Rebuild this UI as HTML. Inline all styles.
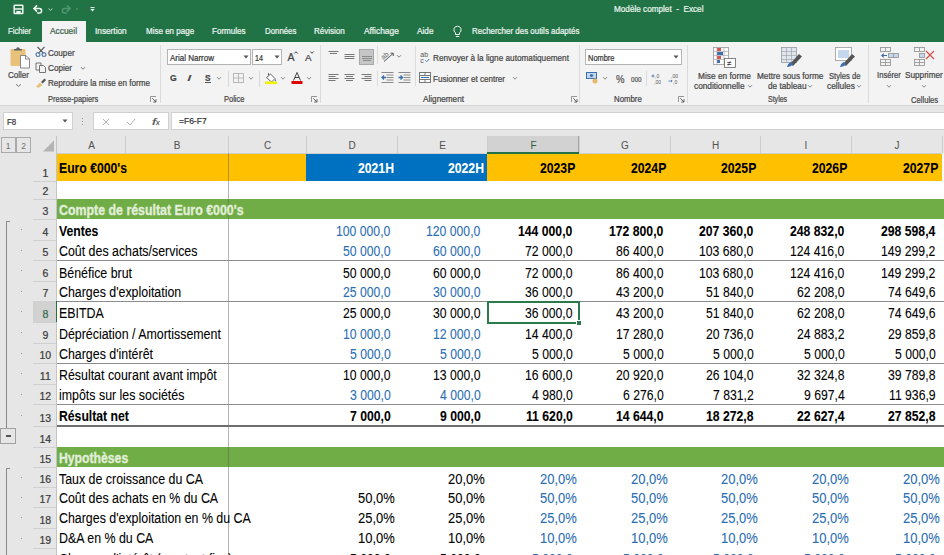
<!DOCTYPE html><html><head><meta charset="utf-8"><style>
*{margin:0;padding:0;box-sizing:border-box}
html,body{width:944px;height:555px;overflow:hidden;background:#fff}
body{position:relative;font-family:"Liberation Sans",sans-serif}
.x{position:absolute;white-space:pre}
.c{-webkit-text-stroke:0.08px currentColor}
.r{-webkit-text-stroke:0.22px currentColor}
.g{-webkit-text-stroke:0.35px currentColor}
svg.x{overflow:visible}
</style></head><body>
<div class="x" style="left:0px;top:0px;width:944px;height:42px;background:#217346"></div>
<svg class="x" style="left:13px;top:4px" width="11" height="11" viewBox="0 0 11 11"><g fill="none" stroke="#f0f7f2" stroke-width="1.5"><rect x="1.2" y="1.2" width="8.6" height="8.4" rx="0.6"/><path d="M1.2 5h8.6"/></g><rect x="3.3" y="7" width="4.4" height="2.6" fill="#f0f7f2"/></svg>
<svg class="x" style="left:33px;top:5px" width="11" height="9" viewBox="0 0 11 9"><g fill="none" stroke="#f0f7f2" stroke-width="1.5" stroke-linecap="round"><path d="M3.6 0.9L1 3.5l2.6 2.6"/><path d="M1.2 3.5h5.1a2.3 2.3 0 0 1 0 4.6h-1.6"/></g></svg>
<svg class="x" style="left:48px;top:8px" width="5" height="3" viewBox="0 0 5 3"><path d="M0.6 0.6l1.9 1.8 1.9-1.8" fill="none" stroke="#d0e4d8" stroke-width="0.9"/></svg>
<svg class="x" style="left:60px;top:5px" width="11" height="9" viewBox="0 0 11 9"><g fill="none" stroke="#4e9670" stroke-width="1.5" stroke-linecap="round"><path d="M7.4 0.9L10 3.5l-2.6 2.6"/><path d="M9.8 3.5h-5.1a2.3 2.3 0 0 0 0 4.6h1.6"/></g></svg>
<div class="x" style="left:76px;top:8.3px;width:2px;height:1.4px;background:#3f8a60"></div>
<svg class="x" style="left:89.5px;top:7px" width="5" height="5" viewBox="0 0 5 5"><path d="M0.5 0.6h4" stroke="#f0f7f2" stroke-width="1"/><path d="M0.3 2h4.4l-2.2 2.5z" fill="#f0f7f2"/></svg>
<div class="x r" style="left:613.70px;top:2.92px;font-size:8.3px;line-height:12px;height:12px;color:#eaf3ee;transform:scale(0.9848,1.0);transform-origin:0 8.88px;">Modèle complet  -  Excel</div>
<div class="x" style="left:42px;top:21px;width:44px;height:21px;background:#f3f3f3"></div>
<div class="x r" style="left:7.90px;top:25.22px;font-size:8.3px;line-height:12px;height:12px;color:#eef5f1;transform:scale(0.9316,1.0);transform-origin:0 8.88px;">Fichier</div>
<div class="x r" style="left:50.20px;top:25.22px;font-size:8.3px;line-height:12px;height:12px;color:#3a5f4b;transform:scale(1.0091,1.0);transform-origin:0 8.88px;">Accueil</div>
<div class="x r" style="left:95.30px;top:25.22px;font-size:8.3px;line-height:12px;height:12px;color:#eef5f1;transform:scale(0.9957,1.0);transform-origin:0 8.88px;">Insertion</div>
<div class="x r" style="left:145.60px;top:25.22px;font-size:8.3px;line-height:12px;height:12px;color:#eef5f1;transform:scale(0.9652,1.0);transform-origin:0 8.88px;">Mise en page</div>
<div class="x r" style="left:212.20px;top:25.22px;font-size:8.3px;line-height:12px;height:12px;color:#eef5f1;transform:scale(0.9713,1.0);transform-origin:0 8.88px;">Formules</div>
<div class="x r" style="left:264.60px;top:25.22px;font-size:8.3px;line-height:12px;height:12px;color:#eef5f1;transform:scale(0.9450,1.0);transform-origin:0 8.88px;">Données</div>
<div class="x r" style="left:314.30px;top:25.22px;font-size:8.3px;line-height:12px;height:12px;color:#eef5f1;transform:scale(0.9676,1.0);transform-origin:0 8.88px;">Révision</div>
<div class="x r" style="left:363.60px;top:25.22px;font-size:8.3px;line-height:12px;height:12px;color:#eef5f1;transform:scale(1.0128,1.0);transform-origin:0 8.88px;">Affichage</div>
<div class="x r" style="left:417.00px;top:25.22px;font-size:8.3px;line-height:12px;height:12px;color:#eef5f1;transform:scale(0.9932,1.0);transform-origin:0 8.88px;">Aide</div>
<div class="x r" style="left:471.60px;top:25.22px;font-size:8.3px;line-height:12px;height:12px;color:#eef5f1;transform:scale(0.9579,1.0);transform-origin:0 8.88px;">Rechercher des outils adaptés</div>
<svg class="x" style="left:452px;top:25px" width="11" height="13" viewBox="0 0 11 13"><g fill="none" stroke="#eef5f1" stroke-width="1"><path d="M5.5 1.2a3.6 3.6 0 0 0-2 6.6v1.7h4v-1.7a3.6 3.6 0 0 0-2-6.6z"/><path d="M3.8 11.5h3.4"/></g></svg>
<div class="x" style="left:0px;top:42px;width:944px;height:63px;background:#f3f3f3"></div>
<div class="x" style="left:0px;top:105px;width:944px;height:1px;background:#d4d4d4"></div>
<div class="x" style="left:160px;top:45px;width:1px;height:58px;background:#dadada"></div>
<div class="x" style="left:320px;top:45px;width:1px;height:58px;background:#dadada"></div>
<div class="x" style="left:579px;top:45px;width:1px;height:58px;background:#dadada"></div>
<div class="x" style="left:687px;top:45px;width:1px;height:58px;background:#dadada"></div>
<div class="x" style="left:868px;top:45px;width:1px;height:58px;background:#dadada"></div>
<svg class="x" style="left:9px;top:46px" width="23" height="23" viewBox="0 0 23 23"><rect x="1.5" y="3" width="15" height="17" rx="1" fill="#e8c27a"/><path d="M5 4.5h8v-1.5h-2.2a1.8 1.8 0 0 0-3.6 0H5z" fill="#5f5f5f"/><path d="M11.5 9.5h5.5l3.5 3.5v9h-9z" fill="#fff" stroke="#7a7a7a" stroke-width="0.9"/><path d="M16.5 9.5v3.5h4" fill="none" stroke="#7a7a7a" stroke-width="0.9"/></svg>
<div class="x r" style="left:7.80px;top:69.35px;font-size:8.8px;line-height:12px;height:12px;color:#444;transform:scale(0.9136,1.0);transform-origin:0 9.05px;">Coller</div>
<svg class="x" style="left:15px;top:83px" width="7" height="5" viewBox="0 0 7 5"><path d="M1 1.2l2.5 2.3 2.5-2.3" fill="none" stroke="#666" stroke-width="0.9"/></svg>
<svg class="x" style="left:35px;top:46px" width="12" height="11" viewBox="0 0 12 11"><g fill="none" stroke-width="1.2"><path d="M2.5 0.8l6 6.5M9.5 0.8l-6 6.5" stroke="#555"/><circle cx="3" cy="8.6" r="1.9" stroke="#5a80b0"/><circle cx="9" cy="8.6" r="1.9" stroke="#5a80b0"/></g></svg>
<div class="x r" style="left:48.40px;top:46.55px;font-size:8.8px;line-height:12px;height:12px;color:#444;transform:scale(0.9216,1.0);transform-origin:0 9.05px;">Couper</div>
<svg class="x" style="left:35px;top:62px" width="12" height="11" viewBox="0 0 12 11"><g fill="none" stroke="#666" stroke-width="0.9"><path d="M1 1h5v7h-5z"/><path d="M4.5 3.5h4l2 2v5h-6z" fill="#f3f3f3"/></g></svg>
<div class="x r" style="left:48.40px;top:61.85px;font-size:8.8px;line-height:12px;height:12px;color:#444;transform:scale(0.9257,1.0);transform-origin:0 9.05px;">Copier</div>
<svg class="x" style="left:80px;top:66px" width="6" height="5" viewBox="0 0 6 5"><path d="M1 1.2l2 2 2-2" fill="none" stroke="#666" stroke-width="0.9"/></svg>
<svg class="x" style="left:35px;top:78px" width="12" height="10" viewBox="0 0 12 10"><path d="M1 8.5l4-4 2.5 2.5-4 3z" fill="#e8c27a"/><path d="M6 4l3.5-3.5 1.6 1.6-3.5 3.5z" fill="#555"/></svg>
<div class="x r" style="left:48.40px;top:77.45px;font-size:8.8px;line-height:12px;height:12px;color:#444;transform:scale(0.9186,1.0);transform-origin:0 9.05px;">Reproduire la mise en forme</div>
<div class="x r" style="left:48.40px;top:93.45px;font-size:8.8px;line-height:12px;height:12px;color:#444;transform:scale(0.8499,1.0);transform-origin:0 9.05px;">Presse-papiers</div>
<svg class="x" style="left:150px;top:96px" width="7" height="7" viewBox="0 0 7 7"><path d="M0.5 6V0.5H6" fill="none" stroke="#8a8a8a" stroke-width="0.9"/><path d="M2.3 2.3l3.6 3.6M6 3.2v2.8H3.2" fill="none" stroke="#555" stroke-width="0.9"/></svg>
<div class="x" style="left:166.5px;top:49px;width:84px;height:16px;background:#fff;border:1px solid #b4b4b4"></div>
<div class="x r" style="left:169.50px;top:51.95px;font-size:8.8px;line-height:12px;height:12px;color:#333;transform:scale(0.9089,1.0);transform-origin:0 9.05px;">Arial Narrow</div>
<svg class="x" style="left:243px;top:55px" width="6" height="4" viewBox="0 0 6 4"><path d="M0.5 0.5h5l-2.5 3z" fill="#555"/></svg>
<div class="x" style="left:252px;top:49px;width:30px;height:16px;background:#fff;border:1px solid #b4b4b4"></div>
<div class="x r" style="left:255.00px;top:51.95px;font-size:8.8px;line-height:12px;height:12px;color:#333;transform:scale(0.8172,1.0);transform-origin:0 9.05px;">14</div>
<svg class="x" style="left:274px;top:55px" width="6" height="4" viewBox="0 0 6 4"><path d="M0.5 0.5h5l-2.5 3z" fill="#555"/></svg>
<div class="x r" style="left:287.50px;top:50.36px;font-size:10.5px;line-height:15px;height:15px;color:#444;">A</div>
<svg class="x" style="left:294px;top:51px" width="4" height="3" viewBox="0 0 4 3"><path d="M0.3 2.5l1.7-1.8 1.7 1.8" fill="none" stroke="#444" stroke-width="1"/></svg>
<div class="x r" style="left:304.50px;top:51.88px;font-size:9px;line-height:13px;height:13px;color:#444;transform:scale(1.0828,1.0);transform-origin:0 9.62px;">A</div>
<svg class="x" style="left:310px;top:51px" width="4" height="3" viewBox="0 0 4 3"><path d="M0.3 0.5l1.7 1.8 1.7-1.8" fill="none" stroke="#444" stroke-width="1"/></svg>
<div class="x r" style="left:170.30px;top:71.65px;font-size:8.5px;line-height:12px;height:12px;color:#444;font-weight:bold;transform:scale(1.0134,1.0);transform-origin:0 8.95px;">G</div>
<div class="x r" style="left:187.00px;top:70.81px;font-size:9.5px;line-height:13px;height:13px;color:#444;transform:scale(1.7052,1);transform-origin:0 9.79px;font-style:italic;">I</div>
<div class="x r" style="left:204.50px;top:71.65px;font-size:8.5px;line-height:12px;height:12px;color:#444;font-weight:bold;transform:scale(0.9701,1.0);transform-origin:0 8.95px;">S</div>
<div class="x" style="left:204.5px;top:82px;width:6px;height:1px;background:#555"></div>
<svg class="x" style="left:216px;top:76px" width="6" height="5" viewBox="0 0 6 5"><path d="M1 1.2l2 2 2-2" fill="none" stroke="#777" stroke-width="0.9"/></svg>
<svg class="x" style="left:248px;top:76px" width="6" height="5" viewBox="0 0 6 5"><path d="M1 1.2l2 2 2-2" fill="none" stroke="#777" stroke-width="0.9"/></svg>
<svg class="x" style="left:279.5px;top:76px" width="6" height="5" viewBox="0 0 6 5"><path d="M1 1.2l2 2 2-2" fill="none" stroke="#777" stroke-width="0.9"/></svg>
<svg class="x" style="left:306px;top:76px" width="6" height="5" viewBox="0 0 6 5"><path d="M1 1.2l2 2 2-2" fill="none" stroke="#777" stroke-width="0.9"/></svg>
<div class="x" style="left:228px;top:71px;width:1px;height:16px;background:#d8d8d8"></div>
<div class="x" style="left:259px;top:71px;width:1px;height:16px;background:#d8d8d8"></div>
<svg class="x" style="left:233px;top:73px" width="11" height="10" viewBox="0 0 11 10"><g fill="none" stroke="#b8b8b8" stroke-width="1"><rect x="0.5" y="0.5" width="10" height="9"/><path d="M5.5 0.5v9M0.5 5h10"/></g></svg>
<svg class="x" style="left:264px;top:72px" width="14" height="13" viewBox="0 0 14 13"><path d="M2.5 5.5l4-3.5 4.5 4.5-3.5 3.5z" fill="#fff" stroke="#555" stroke-width="0.9"/><path d="M4.5 3.5v-2.5" stroke="#555" stroke-width="0.9"/><path d="M11 6.5q1.8 1.8 0.6 3.2q-1.4-0.6-0.6-3.2z" fill="#4a7ab8"/><rect x="1" y="9.5" width="12" height="2.6" fill="#f2f200"/></svg>
<svg class="x" style="left:291px;top:72px" width="12" height="13" viewBox="0 0 12 13"><path d="M2.5 8.5l3.5-8 3.5 8M4 5.5h4" fill="none" stroke="#444" stroke-width="1"/><rect x="0.5" y="9" width="11" height="3" fill="#e00000"/></svg>
<div class="x r" style="left:224.30px;top:93.35px;font-size:8.8px;line-height:12px;height:12px;color:#444;transform:scale(0.8511,1.0);transform-origin:0 9.05px;">Police</div>
<svg class="x" style="left:311px;top:96px" width="7" height="7" viewBox="0 0 7 7"><path d="M0.5 6V0.5H6" fill="none" stroke="#8a8a8a" stroke-width="0.9"/><path d="M2.3 2.3l3.6 3.6M6 3.2v2.8H3.2" fill="none" stroke="#555" stroke-width="0.9"/></svg>
<svg class="x" style="left:328px;top:50px" width="12" height="10" viewBox="0 0 12 10"><path d="M0.5 1.5h10" stroke="#777" stroke-width="1"/><path d="M2 3.5h7" stroke="#777" stroke-width="1"/></svg>
<svg class="x" style="left:344px;top:52px" width="12" height="10" viewBox="0 0 12 10"><path d="M0.5 2.5h10" stroke="#777" stroke-width="1"/><path d="M0.5 4.5h10" stroke="#777" stroke-width="1"/><path d="M0.5 6.5h10" stroke="#777" stroke-width="1"/></svg>
<div class="x" style="left:359px;top:49px;width:15px;height:16px;background:#c6c6c6;border:1px solid #a8a8a8"></div>
<svg class="x" style="left:361px;top:55px" width="12" height="10" viewBox="0 0 12 10"><path d="M1 1.5h10" stroke="#8a8a8a" stroke-width="1"/><path d="M1 3.5h10" stroke="#8a8a8a" stroke-width="1"/><path d="M2 5.5h8" stroke="#8a8a8a" stroke-width="1"/></svg>
<svg class="x" style="left:381px;top:50px" width="14" height="12" viewBox="0 0 14 12"><text x="0" y="8" font-size="7" fill="#555" font-family="Liberation Sans" transform="rotate(-40 4 6)" style="-webkit-text-stroke:0.2px #555">ab</text><path d="M3 11.5l9-8M9.5 3.2h2.8v2.8" fill="none" stroke="#555" stroke-width="1"/></svg>
<svg class="x" style="left:396px;top:54px" width="6" height="5" viewBox="0 0 6 5"><path d="M1 1.2l2 2 2-2" fill="none" stroke="#777" stroke-width="0.9"/></svg>
<div class="x" style="left:377px;top:46px;width:1px;height:18px;background:#dcdcdc"></div>
<div class="x" style="left:377px;top:71px;width:1px;height:15px;background:#dcdcdc"></div>
<div class="x" style="left:415px;top:46px;width:1px;height:40px;background:#dcdcdc"></div>
<svg class="x" style="left:328px;top:73px" width="12" height="10" viewBox="0 0 12 10"><path d="M0.5 1.5h10" stroke="#777" stroke-width="1"/><path d="M0.5 3.5h7" stroke="#777" stroke-width="1"/><path d="M0.5 5.5h10" stroke="#777" stroke-width="1"/><path d="M0.5 7.5h7" stroke="#777" stroke-width="1"/></svg>
<svg class="x" style="left:344px;top:73px" width="12" height="10" viewBox="0 0 12 10"><path d="M0.5 1.5h10" stroke="#777" stroke-width="1"/><path d="M2 3.5h7" stroke="#777" stroke-width="1"/><path d="M0.5 5.5h10" stroke="#777" stroke-width="1"/><path d="M2 7.5h7" stroke="#777" stroke-width="1"/></svg>
<svg class="x" style="left:361px;top:73px" width="12" height="10" viewBox="0 0 12 10"><path d="M0.5 1.5h10" stroke="#777" stroke-width="1"/><path d="M3.5 3.5h7" stroke="#777" stroke-width="1"/><path d="M0.5 5.5h10" stroke="#777" stroke-width="1"/><path d="M3.5 7.5h7" stroke="#777" stroke-width="1"/></svg>
<svg class="x" style="left:381px;top:72px" width="13" height="11" viewBox="0 0 13 11"><path d="M0.5 0.5h12M5.5 3h7M5.5 5.5h7M5.5 8h7M0.5 10.5h12" stroke="#8a8a8a" stroke-width="1"/><path d="M5 5.5h-4M3 3.5l-2 2 2 2" fill="none" stroke="#3b6fb0" stroke-width="1.3"/></svg>
<svg class="x" style="left:398px;top:72px" width="13" height="11" viewBox="0 0 13 11"><path d="M0.5 0.5h12M5.5 3h7M5.5 5.5h7M5.5 8h7M0.5 10.5h12" stroke="#8a8a8a" stroke-width="1"/><path d="M0.5 5.5h4M2.5 3.5l2 2-2 2" fill="none" stroke="#3b6fb0" stroke-width="1.3"/></svg>
<svg class="x" style="left:419.5px;top:50.5px" width="12" height="12" viewBox="0 0 12 12"><text x="0.3" y="5.6" font-size="7" fill="#555" font-family="Liberation Sans" style="-webkit-text-stroke:0.2px #555">ab</text><text x="0.3" y="11.6" font-size="7" fill="#555" font-family="Liberation Sans" style="-webkit-text-stroke:0.2px #555">c</text><path d="M5.5 9.3l1.3 1.3 2.5-2.6" fill="none" stroke="#3b6fb0" stroke-width="1"/></svg>
<div class="x r" style="left:433.00px;top:52.05px;font-size:8.8px;line-height:12px;height:12px;color:#444;transform:scale(0.9329,1.0);transform-origin:0 9.05px;">Renvoyer à la ligne automatiquement</div>
<svg class="x" style="left:419px;top:72px" width="12" height="11" viewBox="0 0 12 11"><rect x="0.5" y="0.5" width="11" height="10" fill="#fff" stroke="#777"/><path d="M0.5 3.5h11M0.5 7.5h11M6 0.5v3M6 7.5v3" stroke="#777"/><path d="M2 5.5h8" stroke="#3b6fb0"/></svg>
<div class="x r" style="left:433.00px;top:72.95px;font-size:8.8px;line-height:12px;height:12px;color:#444;transform:scale(0.9142,1.0);transform-origin:0 9.05px;">Fusionner et centrer</div>
<svg class="x" style="left:512px;top:76px" width="6" height="5" viewBox="0 0 6 5"><path d="M1 1.2l2 2 2-2" fill="none" stroke="#777" stroke-width="0.9"/></svg>
<div class="x r" style="left:423.00px;top:93.35px;font-size:8.8px;line-height:12px;height:12px;color:#444;transform:scale(0.9312,1.0);transform-origin:0 9.05px;">Alignement</div>
<svg class="x" style="left:571px;top:96px" width="7" height="7" viewBox="0 0 7 7"><path d="M0.5 6V0.5H6" fill="none" stroke="#8a8a8a" stroke-width="0.9"/><path d="M2.3 2.3l3.6 3.6M6 3.2v2.8H3.2" fill="none" stroke="#555" stroke-width="0.9"/></svg>
<div class="x" style="left:585px;top:49px;width:97px;height:16px;background:#fff;border:1px solid #b4b4b4"></div>
<div class="x r" style="left:588.00px;top:51.75px;font-size:8.8px;line-height:12px;height:12px;color:#333;transform:scale(0.8466,1.0);transform-origin:0 9.05px;">Nombre</div>
<svg class="x" style="left:673px;top:55px" width="6" height="4" viewBox="0 0 6 4"><path d="M0.5 0.5h5l-2.5 3z" fill="#555"/></svg>
<svg class="x" style="left:586px;top:72px" width="13" height="12" viewBox="0 0 13 12"><rect x="0.5" y="0.5" width="10" height="6" fill="#c5d7ee" stroke="#3b6fb0"/><circle cx="5.5" cy="3.5" r="1.6" fill="#3b6fb0"/><circle cx="9" cy="9" r="2.5" fill="#e8b86a"/></svg>
<svg class="x" style="left:602px;top:76px" width="6" height="5" viewBox="0 0 6 5"><path d="M1 1.2l2 2 2-2" fill="none" stroke="#777" stroke-width="0.9"/></svg>
<div class="x r" style="left:615.50px;top:72.53px;font-size:10px;line-height:14px;height:14px;color:#555;transform:scale(0.9560,1.0);transform-origin:0 10.46px;">%</div>
<div class="x r" style="left:630.80px;top:74.75px;font-size:6.5px;line-height:9px;height:9px;color:#555;transform:scale(0.9682,1.0);transform-origin:0 6.75px;">000</div>
<div class="x" style="left:646px;top:71px;width:1px;height:15px;background:#dcdcdc"></div>
<svg class="x" style="left:651px;top:73px" width="12" height="11" viewBox="0 0 12 11"><text x="4" y="4.5" font-size="5" fill="#555" font-family="Liberation Sans">,0</text><text x="3" y="10.5" font-size="5" fill="#555" font-family="Liberation Sans">,00</text><path d="M0.5 3h3M2 1.5v3" stroke="#3b6fb0" stroke-width="0.8"/></svg>
<svg class="x" style="left:668px;top:73px" width="12" height="11" viewBox="0 0 12 11"><text x="3" y="4.5" font-size="5" fill="#555" font-family="Liberation Sans">,00</text><text x="5" y="10.5" font-size="5" fill="#555" font-family="Liberation Sans">,0</text><path d="M0.5 8h3.5M3 6.8l1.2 1.2-1.2 1.2" fill="none" stroke="#3b6fb0" stroke-width="0.8"/></svg>
<div class="x r" style="left:613.50px;top:93.35px;font-size:8.8px;line-height:12px;height:12px;color:#444;transform:scale(0.8882,1.0);transform-origin:0 9.05px;">Nombre</div>
<svg class="x" style="left:678px;top:96px" width="7" height="7" viewBox="0 0 7 7"><path d="M0.5 6V0.5H6" fill="none" stroke="#8a8a8a" stroke-width="0.9"/><path d="M2.3 2.3l3.6 3.6M6 3.2v2.8H3.2" fill="none" stroke="#555" stroke-width="0.9"/></svg>
<svg class="x" style="left:713px;top:47px" width="23" height="21" viewBox="0 0 23 21"><g stroke="#9a9a9a" stroke-width="0.8" fill="#fff"><rect x="0.5" y="0.5" width="15" height="17"/></g><rect x="4" y="1" width="4" height="3" fill="#d9534f"/><rect x="4" y="5" width="6" height="3" fill="#3b6fb0"/><rect x="4" y="9" width="4" height="3" fill="#d9534f"/><rect x="4" y="13" width="3" height="3" fill="#3b6fb0"/><path d="M0.5 4.5h15M0.5 8.5h15M0.5 12.5h15M4 0.5v17M11 0.5v17" stroke="#9a9a9a" stroke-width="0.6"/><rect x="11.5" y="11.5" width="11" height="9" fill="#fff" stroke="#666" stroke-width="0.8"/><text x="14" y="19" font-size="8" fill="#333" font-family="Liberation Sans">≠</text></svg>
<div class="x r" style="left:697.70px;top:69.65px;font-size:8.8px;line-height:12px;height:12px;color:#444;transform:scale(0.9470,1.0);transform-origin:0 9.05px;">Mise en forme</div>
<div class="x r" style="left:694.00px;top:80.35px;font-size:8.8px;line-height:12px;height:12px;color:#444;transform:scale(0.9383,1.0);transform-origin:0 9.05px;">conditionnelle</div>
<svg class="x" style="left:747px;top:84px" width="6" height="5" viewBox="0 0 6 5"><path d="M1 1.2l2 2 2-2" fill="none" stroke="#777" stroke-width="0.9"/></svg>
<svg class="x" style="left:781px;top:47px" width="22" height="21" viewBox="0 0 22 21"><rect x="0.5" y="0.5" width="15" height="15" fill="#dfe6ef" stroke="#9a9a9a" stroke-width="0.8"/><path d="M0.5 4.5h15M0.5 8.5h15M0.5 12.5h15M5.5 0.5v15M10.5 0.5v15" stroke="#9a9a9a" stroke-width="0.6"/><path d="M9 17l9-10 3 2.5-9 9.5z" fill="#555"/><path d="M6 20q1-4 4-5l2 2q-2 3-6 3z" fill="#3b6fb0"/></svg>
<div class="x r" style="left:756.90px;top:69.65px;font-size:8.8px;line-height:12px;height:12px;color:#444;transform:scale(0.9363,1.0);transform-origin:0 9.05px;">Mettre sous forme</div>
<div class="x r" style="left:768.00px;top:80.35px;font-size:8.8px;line-height:12px;height:12px;color:#444;transform:scale(0.9366,1.0);transform-origin:0 9.05px;">de tableau</div>
<svg class="x" style="left:806.5px;top:84px" width="6" height="5" viewBox="0 0 6 5"><path d="M1 1.2l2 2 2-2" fill="none" stroke="#777" stroke-width="0.9"/></svg>
<svg class="x" style="left:835px;top:47px" width="21" height="21" viewBox="0 0 21 21"><rect x="0.5" y="0.5" width="16" height="13" fill="#fff" stroke="#9a9a9a" stroke-width="0.8"/><rect x="3" y="3" width="11" height="8" fill="#c5d7ee"/><path d="M8 17l9-10 3 2.5-9 9.5z" fill="#555"/><path d="M5 20q1-4 4-5l2 2q-2 3-6 3z" fill="#3b6fb0"/></svg>
<div class="x r" style="left:828.60px;top:69.65px;font-size:8.8px;line-height:12px;height:12px;color:#444;transform:scale(0.8674,1.0);transform-origin:0 9.05px;">Styles de</div>
<div class="x r" style="left:827.00px;top:80.35px;font-size:8.8px;line-height:12px;height:12px;color:#444;transform:scale(0.9540,1.0);transform-origin:0 9.05px;">cellules</div>
<svg class="x" style="left:855.5px;top:84px" width="6" height="5" viewBox="0 0 6 5"><path d="M1 1.2l2 2 2-2" fill="none" stroke="#777" stroke-width="0.9"/></svg>
<div class="x r" style="left:767.60px;top:93.45px;font-size:8.8px;line-height:12px;height:12px;color:#444;transform:scale(0.7970,1.0);transform-origin:0 9.05px;">Styles</div>
<svg class="x" style="left:880px;top:47px" width="19" height="19" viewBox="0 0 19 19"><g fill="none" stroke="#999" stroke-width="0.9"><rect x="0.5" y="0.5" width="10" height="4"/><path d="M5.5 0.5v4"/><rect x="0.5" y="12.5" width="10" height="6"/><path d="M5.5 12.5v6M0.5 15.5h10"/><rect x="8.5" y="6.5" width="10" height="4" fill="#c5d7ee"/><path d="M13.5 6.5v4"/></g><path d="M7 8.5h-5M3.8 6.6l-2 1.9 2 1.9" fill="none" stroke="#3b6fb0" stroke-width="1.1"/></svg>
<div class="x r" style="left:876.80px;top:69.35px;font-size:8.8px;line-height:12px;height:12px;color:#444;transform:scale(0.8726,1.0);transform-origin:0 9.05px;">Insérer</div>
<svg class="x" style="left:886.2px;top:84px" width="6" height="5" viewBox="0 0 6 5"><path d="M1 1.2l2 2 2-2" fill="none" stroke="#777" stroke-width="0.9"/></svg>
<svg class="x" style="left:914px;top:47px" width="22" height="19" viewBox="0 0 22 19"><g fill="none" stroke="#999" stroke-width="0.9"><rect x="0.5" y="0.5" width="10" height="4"/><path d="M5.5 0.5v4"/><rect x="0.5" y="12.5" width="10" height="6"/><path d="M5.5 12.5v6M0.5 15.5h10"/><rect x="5.5" y="6.5" width="5" height="4" fill="#c5d7ee"/></g><path d="M12 4l8 8M20 4l-8 8" stroke="#d9534f" stroke-width="1.3"/></svg>
<div class="x r" style="left:905.00px;top:69.35px;font-size:8.8px;line-height:12px;height:12px;color:#444;transform:scale(0.9312,1.0);transform-origin:0 9.05px;">Supprimer</div>
<svg class="x" style="left:920.8px;top:84px" width="6" height="5" viewBox="0 0 6 5"><path d="M1 1.2l2 2 2-2" fill="none" stroke="#777" stroke-width="0.9"/></svg>
<div class="x r" style="left:910.50px;top:93.55px;font-size:8.8px;line-height:12px;height:12px;color:#444;transform:scale(0.8689,1.0);transform-origin:0 9.05px;">Cellules</div>
<div class="x" style="left:0px;top:106px;width:944px;height:30px;background:#e6e6e6"></div>
<div class="x" style="left:2.5px;top:112px;width:70px;height:18px;background:#fff;border:1px solid #d0d0d0"></div>
<div class="x r" style="left:7.00px;top:115.58px;font-size:9px;line-height:13px;height:13px;color:#333;transform:scale(0.8759,1.0);transform-origin:0 9.62px;">F8</div>
<svg class="x" style="left:62px;top:119px" width="6" height="4" viewBox="0 0 6 4"><path d="M0.5 0.5h5l-2.5 3z" fill="#555"/></svg>
<div class="x" style="left:82px;top:118px;width:1px;height:1.2px;background:#999"></div>
<div class="x" style="left:82px;top:121px;width:1px;height:1.2px;background:#999"></div>
<div class="x" style="left:82px;top:124px;width:1px;height:1.2px;background:#999"></div>
<div class="x" style="left:93px;top:112px;width:75.5px;height:18px;background:#fff;border:1px solid #d0d0d0"></div>
<svg class="x" style="left:102px;top:118px" width="8" height="8" viewBox="0 0 8 8"><path d="M1 1l6 6M7 1l-6 6" stroke="#b0b0b0" stroke-width="1"/></svg>
<svg class="x" style="left:126px;top:118px" width="10" height="8" viewBox="0 0 10 8"><path d="M1 4l3 3 5-6" fill="none" stroke="#b0b0b0" stroke-width="1"/></svg>
<div class="x r" style="left:152.00px;top:115.21px;font-size:9.5px;line-height:13px;height:13px;color:#555;transform:scale(1.5157,1.0);transform-origin:0 9.79px;font-style:italic;">f</div>
<div class="x r" style="left:155.80px;top:118.07px;font-size:7px;line-height:10px;height:10px;color:#555;transform:scale(1.0286,1.0);transform-origin:0 7.43px;font-style:italic;">x</div>
<div class="x" style="left:170.5px;top:112px;width:780px;height:18px;background:#fff;border:1px solid #d0d0d0"></div>
<div class="x r" style="left:179.10px;top:115.38px;font-size:9px;line-height:13px;height:13px;color:#333;transform:scale(0.9433,1.0);transform-origin:0 9.62px;">=F6-F7</div>
<div class="x" style="left:0px;top:136px;width:944px;height:17px;background:#e6e6e6"></div>
<div class="x" style="left:487px;top:136px;width:92px;height:17px;background:#d2d2d2"></div>
<div class="x" style="left:125px;top:136px;width:1px;height:17px;background:#cdcdcd"></div>
<div class="x" style="left:88.16px;top:138.84px;font-size:10px;line-height:14px;height:14px;color:#505050;">A</div>
<div class="x" style="left:228px;top:136px;width:1px;height:17px;background:#cdcdcd"></div>
<div class="x" style="left:173.66px;top:138.84px;font-size:10px;line-height:14px;height:14px;color:#505050;">B</div>
<div class="x" style="left:306px;top:136px;width:1px;height:17px;background:#cdcdcd"></div>
<div class="x" style="left:263.89px;top:138.84px;font-size:10px;line-height:14px;height:14px;color:#505050;">C</div>
<div class="x" style="left:397px;top:136px;width:1px;height:17px;background:#cdcdcd"></div>
<div class="x" style="left:348.39px;top:138.84px;font-size:10px;line-height:14px;height:14px;color:#505050;">D</div>
<div class="x" style="left:487px;top:136px;width:1px;height:17px;background:#cdcdcd"></div>
<div class="x" style="left:439.16px;top:138.84px;font-size:10px;line-height:14px;height:14px;color:#505050;">E</div>
<div class="x" style="left:579px;top:136px;width:1px;height:17px;background:#cdcdcd"></div>
<div class="x" style="left:530.45px;top:138.84px;font-size:10px;line-height:14px;height:14px;color:#2d5a40;">F</div>
<div class="x" style="left:670px;top:136px;width:1px;height:17px;background:#cdcdcd"></div>
<div class="x" style="left:621.11px;top:138.84px;font-size:10px;line-height:14px;height:14px;color:#505050;">G</div>
<div class="x" style="left:760px;top:136px;width:1px;height:17px;background:#cdcdcd"></div>
<div class="x" style="left:711.89px;top:138.84px;font-size:10px;line-height:14px;height:14px;color:#505050;">H</div>
<div class="x" style="left:851px;top:136px;width:1px;height:17px;background:#cdcdcd"></div>
<div class="x" style="left:804.61px;top:138.84px;font-size:10px;line-height:14px;height:14px;color:#505050;">I</div>
<div class="x" style="left:942px;top:136px;width:1px;height:17px;background:#cdcdcd"></div>
<div class="x" style="left:894.50px;top:138.84px;font-size:10px;line-height:14px;height:14px;color:#505050;">J</div>
<div class="x" style="left:56px;top:136px;width:1px;height:419px;background:#c4c4c4"></div>
<div class="x" style="left:57px;top:153px;width:887px;height:1px;background:#cfcfcf"></div>
<div class="x" style="left:487px;top:152px;width:92px;height:2px;background:#217346"></div>
<div class="x" style="left:578px;top:136px;width:1px;height:16px;background:#a6a6a6"></div>
<div class="x" style="left:0.5px;top:137px;width:15px;height:16px;background:#e6e6e6;border:1px solid #a9a9a9"></div>
<div class="x" style="left:5.64px;top:139.55px;font-size:8.5px;line-height:12px;height:12px;color:#707070;">1</div>
<div class="x" style="left:16px;top:137px;width:15px;height:16px;background:#e6e6e6;border:1px solid #a9a9a9"></div>
<div class="x" style="left:21.14px;top:139.55px;font-size:8.5px;line-height:12px;height:12px;color:#707070;">2</div>
<svg class="x" style="left:43px;top:140px" width="12" height="12" viewBox="0 0 12 12"><path d="M11 0.5v11h-11z" fill="#b3b3b3"/></svg>
<div class="x" style="left:0px;top:153px;width:56px;height:402px;background:#e6e6e6"></div>
<div class="x" style="left:32px;top:153px;width:24px;height:402px;background:#e6e6e6"></div>
<div class="x" style="left:33px;top:181px;width:23px;height:1px;background:#d0d0d0"></div>
<div class="x r" style="left:42.38px;top:166.06px;font-size:10.5px;line-height:15px;height:15px;color:#3a3a3a;">1</div>
<div class="x" style="left:33px;top:199px;width:23px;height:1px;background:#d0d0d0"></div>
<div class="x r" style="left:42.38px;top:184.06px;font-size:10.5px;line-height:15px;height:15px;color:#3a3a3a;">2</div>
<div class="x" style="left:33px;top:219px;width:23px;height:1px;background:#d0d0d0"></div>
<div class="x r" style="left:42.38px;top:204.06px;font-size:10.5px;line-height:15px;height:15px;color:#3a3a3a;">3</div>
<div class="x" style="left:33px;top:240px;width:23px;height:1px;background:#d0d0d0"></div>
<div class="x r" style="left:42.38px;top:225.06px;font-size:10.5px;line-height:15px;height:15px;color:#3a3a3a;">4</div>
<div class="x" style="left:21px;top:229.0px;width:1.2px;height:1.2px;background:#9a9a9a"></div>
<div class="x" style="left:33px;top:260px;width:23px;height:1px;background:#d0d0d0"></div>
<div class="x r" style="left:42.38px;top:245.06px;font-size:10.5px;line-height:15px;height:15px;color:#3a3a3a;">5</div>
<div class="x" style="left:21px;top:249.5px;width:1.2px;height:1.2px;background:#9a9a9a"></div>
<div class="x" style="left:33px;top:281px;width:23px;height:1px;background:#d0d0d0"></div>
<div class="x r" style="left:42.38px;top:266.06px;font-size:10.5px;line-height:15px;height:15px;color:#3a3a3a;">6</div>
<div class="x" style="left:21px;top:270.0px;width:1.2px;height:1.2px;background:#9a9a9a"></div>
<div class="x" style="left:33px;top:301px;width:23px;height:1px;background:#d0d0d0"></div>
<div class="x r" style="left:42.38px;top:286.06px;font-size:10.5px;line-height:15px;height:15px;color:#3a3a3a;">7</div>
<div class="x" style="left:21px;top:290.5px;width:1.2px;height:1.2px;background:#9a9a9a"></div>
<div class="x" style="left:33px;top:301px;width:23px;height:21px;background:#d2d2d2"></div>
<div class="x" style="left:56px;top:301px;width:1px;height:21px;background:#217346"></div>
<div class="x" style="left:33px;top:322px;width:23px;height:1px;background:#d0d0d0"></div>
<div class="x r" style="left:42.38px;top:307.06px;font-size:10.5px;line-height:15px;height:15px;color:#2d6a48;">8</div>
<div class="x" style="left:21px;top:311.0px;width:1.2px;height:1.2px;background:#9a9a9a"></div>
<div class="x" style="left:33px;top:343px;width:23px;height:1px;background:#d0d0d0"></div>
<div class="x r" style="left:42.38px;top:328.06px;font-size:10.5px;line-height:15px;height:15px;color:#3a3a3a;">9</div>
<div class="x" style="left:21px;top:332.0px;width:1.2px;height:1.2px;background:#9a9a9a"></div>
<div class="x" style="left:33px;top:363px;width:23px;height:1px;background:#d0d0d0"></div>
<div class="x r" style="left:39.46px;top:348.06px;font-size:10.5px;line-height:15px;height:15px;color:#3a3a3a;">10</div>
<div class="x" style="left:21px;top:352.5px;width:1.2px;height:1.2px;background:#9a9a9a"></div>
<div class="x" style="left:33px;top:384px;width:23px;height:1px;background:#d0d0d0"></div>
<div class="x r" style="left:39.85px;top:369.06px;font-size:10.5px;line-height:15px;height:15px;color:#3a3a3a;">11</div>
<div class="x" style="left:21px;top:373.0px;width:1.2px;height:1.2px;background:#9a9a9a"></div>
<div class="x" style="left:33px;top:404px;width:23px;height:1px;background:#d0d0d0"></div>
<div class="x r" style="left:39.46px;top:389.06px;font-size:10.5px;line-height:15px;height:15px;color:#3a3a3a;">12</div>
<div class="x" style="left:21px;top:393.5px;width:1.2px;height:1.2px;background:#9a9a9a"></div>
<div class="x" style="left:33px;top:426px;width:23px;height:1px;background:#d0d0d0"></div>
<div class="x r" style="left:39.46px;top:411.06px;font-size:10.5px;line-height:15px;height:15px;color:#3a3a3a;">13</div>
<div class="x" style="left:21px;top:414.5px;width:1.2px;height:1.2px;background:#9a9a9a"></div>
<div class="x" style="left:33px;top:447px;width:23px;height:1px;background:#d0d0d0"></div>
<div class="x r" style="left:39.46px;top:432.06px;font-size:10.5px;line-height:15px;height:15px;color:#3a3a3a;">14</div>
<div class="x" style="left:33px;top:467px;width:23px;height:1px;background:#d0d0d0"></div>
<div class="x r" style="left:39.46px;top:452.06px;font-size:10.5px;line-height:15px;height:15px;color:#3a3a3a;">15</div>
<div class="x" style="left:33px;top:487px;width:23px;height:1px;background:#d0d0d0"></div>
<div class="x r" style="left:39.46px;top:472.06px;font-size:10.5px;line-height:15px;height:15px;color:#3a3a3a;">16</div>
<div class="x" style="left:21px;top:476.5px;width:1.2px;height:1.2px;background:#9a9a9a"></div>
<div class="x" style="left:33px;top:507px;width:23px;height:1px;background:#d0d0d0"></div>
<div class="x r" style="left:39.46px;top:492.06px;font-size:10.5px;line-height:15px;height:15px;color:#3a3a3a;">17</div>
<div class="x" style="left:21px;top:496.5px;width:1.2px;height:1.2px;background:#9a9a9a"></div>
<div class="x" style="left:33px;top:528px;width:23px;height:1px;background:#d0d0d0"></div>
<div class="x r" style="left:39.46px;top:513.06px;font-size:10.5px;line-height:15px;height:15px;color:#3a3a3a;">18</div>
<div class="x" style="left:21px;top:517.0px;width:1.2px;height:1.2px;background:#9a9a9a"></div>
<div class="x" style="left:33px;top:548px;width:23px;height:1px;background:#d0d0d0"></div>
<div class="x r" style="left:39.46px;top:533.06px;font-size:10.5px;line-height:15px;height:15px;color:#3a3a3a;">19</div>
<div class="x" style="left:21px;top:537.5px;width:1.2px;height:1.2px;background:#9a9a9a"></div>
<div class="x" style="left:33px;top:569px;width:23px;height:1px;background:#d0d0d0"></div>
<div class="x r" style="left:39.46px;top:554.06px;font-size:10.5px;line-height:15px;height:15px;color:#3a3a3a;">20</div>
<div class="x" style="left:6px;top:220.5px;width:1px;height:208px;background:#8a8a8a"></div>
<div class="x" style="left:6px;top:220.5px;width:4px;height:1px;background:#8a8a8a"></div>
<div class="x" style="left:0px;top:428px;width:15.5px;height:16px;background:#e6e6e6;border:1px solid #a0a0a0"></div>
<div class="x" style="left:5.5px;top:435px;width:5.5px;height:1.6px;background:#555"></div>
<div class="x" style="left:6px;top:468px;width:1px;height:90px;background:#8a8a8a"></div>
<div class="x" style="left:6px;top:468px;width:4px;height:1px;background:#8a8a8a"></div>
<div class="x" style="left:57px;top:154px;width:249px;height:27px;background:#ffc000"></div>
<div class="x" style="left:306px;top:154px;width:181px;height:27px;background:#0070c0"></div>
<div class="x" style="left:487px;top:154px;width:455px;height:27px;background:#ffc000"></div>
<div class="x" style="left:57px;top:199px;width:887px;height:20px;background:#70ad47"></div>
<div class="x" style="left:57px;top:447px;width:887px;height:20px;background:#70ad47"></div>
<div class="x" style="left:942px;top:153px;width:2px;height:27px;background:#fff"></div>
<div class="x" style="left:228px;top:153px;width:1px;height:402px;background:rgba(90,90,90,0.45)"></div>
<div class="x" style="left:57px;top:260px;width:887px;height:1px;background:#8c8c8c"></div>
<div class="x" style="left:57px;top:301px;width:887px;height:1px;background:#8c8c8c"></div>
<div class="x" style="left:57px;top:363px;width:887px;height:1px;background:#8c8c8c"></div>
<div class="x" style="left:57px;top:404px;width:887px;height:1px;background:#8c8c8c"></div>
<div class="x" style="left:57px;top:425px;width:887px;height:2px;background:#6e6e6e"></div>
<div class="x c" style="left:59.20px;top:157px;font-size:15.5px;line-height:22px;height:22px;color:#000;font-weight:bold;transform:scale(0.7876,1.0);transform-origin:0 16px">Euro €000&#x27;s</div>
<div class="x c" style="left:358.23px;top:157px;font-size:15.5px;line-height:22px;height:22px;color:#fff;font-weight:bold;transform:scale(0.7876,1.0);transform-origin:0 16px">2021H</div>
<div class="x c" style="left:448.23px;top:157px;font-size:15.5px;line-height:22px;height:22px;color:#fff;font-weight:bold;transform:scale(0.7876,1.0);transform-origin:0 16px">2022H</div>
<div class="x c" style="left:540.40px;top:157px;font-size:15.5px;line-height:22px;height:22px;color:#000;font-weight:bold;transform:scale(0.7876,1.0);transform-origin:0 16px">2023P</div>
<div class="x c" style="left:631.40px;top:157px;font-size:15.5px;line-height:22px;height:22px;color:#000;font-weight:bold;transform:scale(0.7876,1.0);transform-origin:0 16px">2024P</div>
<div class="x c" style="left:721.40px;top:157px;font-size:15.5px;line-height:22px;height:22px;color:#000;font-weight:bold;transform:scale(0.7876,1.0);transform-origin:0 16px">2025P</div>
<div class="x c" style="left:812.40px;top:157px;font-size:15.5px;line-height:22px;height:22px;color:#000;font-weight:bold;transform:scale(0.7876,1.0);transform-origin:0 16px">2026P</div>
<div class="x c" style="left:903.40px;top:157px;font-size:15.5px;line-height:22px;height:22px;color:#000;font-weight:bold;transform:scale(0.7876,1.0);transform-origin:0 16px">2027P</div>
<div class="x c g" style="left:59.20px;top:199px;font-size:15.5px;line-height:22px;height:22px;color:#e2efda;font-weight:bold;transform:scale(0.7985,1.0);transform-origin:0 16px">Compte de résultat Euro €000&#x27;s</div>
<div class="x c g" style="left:59.20px;top:447px;font-size:15.5px;line-height:22px;height:22px;color:#e2efda;font-weight:bold;transform:scale(0.7876,1.0);transform-origin:0 16px">Hypothèses</div>
<div class="x c" style="left:59.20px;top:220px;font-size:15.5px;line-height:22px;height:22px;color:#000;font-weight:bold;transform:scale(0.7876,1.0);transform-origin:0 16px">Ventes</div>
<div class="x c" style="left:336.19px;top:220px;font-size:15.5px;line-height:22px;height:22px;color:#2a6db3;transform:scale(0.7876,1.0);transform-origin:0 16px">100 000,0</div>
<div class="x c" style="left:426.19px;top:220px;font-size:15.5px;line-height:22px;height:22px;color:#2a6db3;transform:scale(0.7876,1.0);transform-origin:0 16px">120 000,0</div>
<div class="x c" style="left:518.19px;top:220px;font-size:15.5px;line-height:22px;height:22px;color:#000;font-weight:bold;transform:scale(0.7876,1.0);transform-origin:0 16px">144 000,0</div>
<div class="x c" style="left:609.19px;top:220px;font-size:15.5px;line-height:22px;height:22px;color:#000;font-weight:bold;transform:scale(0.7876,1.0);transform-origin:0 16px">172 800,0</div>
<div class="x c" style="left:699.19px;top:220px;font-size:15.5px;line-height:22px;height:22px;color:#000;font-weight:bold;transform:scale(0.7876,1.0);transform-origin:0 16px">207 360,0</div>
<div class="x c" style="left:790.19px;top:220px;font-size:15.5px;line-height:22px;height:22px;color:#000;font-weight:bold;transform:scale(0.7876,1.0);transform-origin:0 16px">248 832,0</div>
<div class="x c" style="left:881.19px;top:220px;font-size:15.5px;line-height:22px;height:22px;color:#000;font-weight:bold;transform:scale(0.7876,1.0);transform-origin:0 16px">298 598,4</div>
<div class="x c" style="left:59.20px;top:240px;font-size:15.5px;line-height:22px;height:22px;color:#000;transform:scale(0.7994,1.0);transform-origin:0 16px">Coût des achats/services</div>
<div class="x c" style="left:342.98px;top:240px;font-size:15.5px;line-height:22px;height:22px;color:#2a6db3;transform:scale(0.7876,1.0);transform-origin:0 16px">50 000,0</div>
<div class="x c" style="left:432.98px;top:240px;font-size:15.5px;line-height:22px;height:22px;color:#2a6db3;transform:scale(0.7876,1.0);transform-origin:0 16px">60 000,0</div>
<div class="x c" style="left:524.98px;top:240px;font-size:15.5px;line-height:22px;height:22px;color:#000;transform:scale(0.7876,1.0);transform-origin:0 16px">72 000,0</div>
<div class="x c" style="left:615.98px;top:240px;font-size:15.5px;line-height:22px;height:22px;color:#000;transform:scale(0.7876,1.0);transform-origin:0 16px">86 400,0</div>
<div class="x c" style="left:699.19px;top:240px;font-size:15.5px;line-height:22px;height:22px;color:#000;transform:scale(0.7876,1.0);transform-origin:0 16px">103 680,0</div>
<div class="x c" style="left:790.19px;top:240px;font-size:15.5px;line-height:22px;height:22px;color:#000;transform:scale(0.7876,1.0);transform-origin:0 16px">124 416,0</div>
<div class="x c" style="left:881.19px;top:240px;font-size:15.5px;line-height:22px;height:22px;color:#000;transform:scale(0.7876,1.0);transform-origin:0 16px">149 299,2</div>
<div class="x c" style="left:59.20px;top:262px;font-size:15.5px;line-height:22px;height:22px;color:#000;transform:scale(0.7994,1.0);transform-origin:0 16px">Bénéfice brut</div>
<div class="x c" style="left:342.98px;top:262px;font-size:15.5px;line-height:22px;height:22px;color:#000;transform:scale(0.7876,1.0);transform-origin:0 16px">50 000,0</div>
<div class="x c" style="left:432.98px;top:262px;font-size:15.5px;line-height:22px;height:22px;color:#000;transform:scale(0.7876,1.0);transform-origin:0 16px">60 000,0</div>
<div class="x c" style="left:524.98px;top:262px;font-size:15.5px;line-height:22px;height:22px;color:#000;transform:scale(0.7876,1.0);transform-origin:0 16px">72 000,0</div>
<div class="x c" style="left:615.98px;top:262px;font-size:15.5px;line-height:22px;height:22px;color:#000;transform:scale(0.7876,1.0);transform-origin:0 16px">86 400,0</div>
<div class="x c" style="left:699.19px;top:262px;font-size:15.5px;line-height:22px;height:22px;color:#000;transform:scale(0.7876,1.0);transform-origin:0 16px">103 680,0</div>
<div class="x c" style="left:790.19px;top:262px;font-size:15.5px;line-height:22px;height:22px;color:#000;transform:scale(0.7876,1.0);transform-origin:0 16px">124 416,0</div>
<div class="x c" style="left:881.19px;top:262px;font-size:15.5px;line-height:22px;height:22px;color:#000;transform:scale(0.7876,1.0);transform-origin:0 16px">149 299,2</div>
<div class="x c" style="left:59.20px;top:281px;font-size:15.5px;line-height:22px;height:22px;color:#000;transform:scale(0.7993,1.0);transform-origin:0 16px">Charges d&#x27;exploitation</div>
<div class="x c" style="left:342.98px;top:281px;font-size:15.5px;line-height:22px;height:22px;color:#2a6db3;transform:scale(0.7876,1.0);transform-origin:0 16px">25 000,0</div>
<div class="x c" style="left:432.98px;top:281px;font-size:15.5px;line-height:22px;height:22px;color:#2a6db3;transform:scale(0.7876,1.0);transform-origin:0 16px">30 000,0</div>
<div class="x c" style="left:524.98px;top:281px;font-size:15.5px;line-height:22px;height:22px;color:#000;transform:scale(0.7876,1.0);transform-origin:0 16px">36 000,0</div>
<div class="x c" style="left:615.98px;top:281px;font-size:15.5px;line-height:22px;height:22px;color:#000;transform:scale(0.7876,1.0);transform-origin:0 16px">43 200,0</div>
<div class="x c" style="left:705.98px;top:281px;font-size:15.5px;line-height:22px;height:22px;color:#000;transform:scale(0.7876,1.0);transform-origin:0 16px">51 840,0</div>
<div class="x c" style="left:796.98px;top:281px;font-size:15.5px;line-height:22px;height:22px;color:#000;transform:scale(0.7876,1.0);transform-origin:0 16px">62 208,0</div>
<div class="x c" style="left:887.98px;top:281px;font-size:15.5px;line-height:22px;height:22px;color:#000;transform:scale(0.7876,1.0);transform-origin:0 16px">74 649,6</div>
<div class="x c" style="left:59.20px;top:302px;font-size:15.5px;line-height:22px;height:22px;color:#000;transform:scale(0.7994,1.0);transform-origin:0 16px">EBITDA</div>
<div class="x c" style="left:342.98px;top:302px;font-size:15.5px;line-height:22px;height:22px;color:#000;transform:scale(0.7876,1.0);transform-origin:0 16px">25 000,0</div>
<div class="x c" style="left:432.98px;top:302px;font-size:15.5px;line-height:22px;height:22px;color:#000;transform:scale(0.7876,1.0);transform-origin:0 16px">30 000,0</div>
<div class="x c" style="left:524.98px;top:302px;font-size:15.5px;line-height:22px;height:22px;color:#000;transform:scale(0.7876,1.0);transform-origin:0 16px">36 000,0</div>
<div class="x c" style="left:615.98px;top:302px;font-size:15.5px;line-height:22px;height:22px;color:#000;transform:scale(0.7876,1.0);transform-origin:0 16px">43 200,0</div>
<div class="x c" style="left:705.98px;top:302px;font-size:15.5px;line-height:22px;height:22px;color:#000;transform:scale(0.7876,1.0);transform-origin:0 16px">51 840,0</div>
<div class="x c" style="left:796.98px;top:302px;font-size:15.5px;line-height:22px;height:22px;color:#000;transform:scale(0.7876,1.0);transform-origin:0 16px">62 208,0</div>
<div class="x c" style="left:887.98px;top:302px;font-size:15.5px;line-height:22px;height:22px;color:#000;transform:scale(0.7876,1.0);transform-origin:0 16px">74 649,6</div>
<div class="x c" style="left:59.20px;top:323px;font-size:15.5px;line-height:22px;height:22px;color:#000;transform:scale(0.7994,1.0);transform-origin:0 16px">Dépréciation / Amortissement</div>
<div class="x c" style="left:342.98px;top:323px;font-size:15.5px;line-height:22px;height:22px;color:#2a6db3;transform:scale(0.7876,1.0);transform-origin:0 16px">10 000,0</div>
<div class="x c" style="left:432.98px;top:323px;font-size:15.5px;line-height:22px;height:22px;color:#2a6db3;transform:scale(0.7876,1.0);transform-origin:0 16px">12 000,0</div>
<div class="x c" style="left:524.98px;top:323px;font-size:15.5px;line-height:22px;height:22px;color:#000;transform:scale(0.7876,1.0);transform-origin:0 16px">14 400,0</div>
<div class="x c" style="left:615.98px;top:323px;font-size:15.5px;line-height:22px;height:22px;color:#000;transform:scale(0.7876,1.0);transform-origin:0 16px">17 280,0</div>
<div class="x c" style="left:705.98px;top:323px;font-size:15.5px;line-height:22px;height:22px;color:#000;transform:scale(0.7876,1.0);transform-origin:0 16px">20 736,0</div>
<div class="x c" style="left:796.98px;top:323px;font-size:15.5px;line-height:22px;height:22px;color:#000;transform:scale(0.7876,1.0);transform-origin:0 16px">24 883,2</div>
<div class="x c" style="left:887.98px;top:323px;font-size:15.5px;line-height:22px;height:22px;color:#000;transform:scale(0.7876,1.0);transform-origin:0 16px">29 859,8</div>
<div class="x c" style="left:59.20px;top:343px;font-size:15.5px;line-height:22px;height:22px;color:#000;transform:scale(0.7994,1.0);transform-origin:0 16px">Charges d&#x27;intérêt</div>
<div class="x c" style="left:349.77px;top:343px;font-size:15.5px;line-height:22px;height:22px;color:#2a6db3;transform:scale(0.7876,1.0);transform-origin:0 16px">5 000,0</div>
<div class="x c" style="left:439.77px;top:343px;font-size:15.5px;line-height:22px;height:22px;color:#2a6db3;transform:scale(0.7876,1.0);transform-origin:0 16px">5 000,0</div>
<div class="x c" style="left:531.77px;top:343px;font-size:15.5px;line-height:22px;height:22px;color:#000;transform:scale(0.7876,1.0);transform-origin:0 16px">5 000,0</div>
<div class="x c" style="left:622.77px;top:343px;font-size:15.5px;line-height:22px;height:22px;color:#000;transform:scale(0.7876,1.0);transform-origin:0 16px">5 000,0</div>
<div class="x c" style="left:712.77px;top:343px;font-size:15.5px;line-height:22px;height:22px;color:#000;transform:scale(0.7876,1.0);transform-origin:0 16px">5 000,0</div>
<div class="x c" style="left:803.77px;top:343px;font-size:15.5px;line-height:22px;height:22px;color:#000;transform:scale(0.7876,1.0);transform-origin:0 16px">5 000,0</div>
<div class="x c" style="left:894.77px;top:343px;font-size:15.5px;line-height:22px;height:22px;color:#000;transform:scale(0.7876,1.0);transform-origin:0 16px">5 000,0</div>
<div class="x c" style="left:59.20px;top:364px;font-size:15.5px;line-height:22px;height:22px;color:#000;transform:scale(0.7994,1.0);transform-origin:0 16px">Résultat courant avant impôt</div>
<div class="x c" style="left:342.98px;top:364px;font-size:15.5px;line-height:22px;height:22px;color:#000;transform:scale(0.7876,1.0);transform-origin:0 16px">10 000,0</div>
<div class="x c" style="left:432.98px;top:364px;font-size:15.5px;line-height:22px;height:22px;color:#000;transform:scale(0.7876,1.0);transform-origin:0 16px">13 000,0</div>
<div class="x c" style="left:524.98px;top:364px;font-size:15.5px;line-height:22px;height:22px;color:#000;transform:scale(0.7876,1.0);transform-origin:0 16px">16 600,0</div>
<div class="x c" style="left:615.98px;top:364px;font-size:15.5px;line-height:22px;height:22px;color:#000;transform:scale(0.7876,1.0);transform-origin:0 16px">20 920,0</div>
<div class="x c" style="left:705.98px;top:364px;font-size:15.5px;line-height:22px;height:22px;color:#000;transform:scale(0.7876,1.0);transform-origin:0 16px">26 104,0</div>
<div class="x c" style="left:796.98px;top:364px;font-size:15.5px;line-height:22px;height:22px;color:#000;transform:scale(0.7876,1.0);transform-origin:0 16px">32 324,8</div>
<div class="x c" style="left:887.98px;top:364px;font-size:15.5px;line-height:22px;height:22px;color:#000;transform:scale(0.7876,1.0);transform-origin:0 16px">39 789,8</div>
<div class="x c" style="left:59.20px;top:384px;font-size:15.5px;line-height:22px;height:22px;color:#000;transform:scale(0.7994,1.0);transform-origin:0 16px">impôts sur les sociétés</div>
<div class="x c" style="left:349.77px;top:384px;font-size:15.5px;line-height:22px;height:22px;color:#2a6db3;transform:scale(0.7876,1.0);transform-origin:0 16px">3 000,0</div>
<div class="x c" style="left:439.77px;top:384px;font-size:15.5px;line-height:22px;height:22px;color:#2a6db3;transform:scale(0.7876,1.0);transform-origin:0 16px">4 000,0</div>
<div class="x c" style="left:531.77px;top:384px;font-size:15.5px;line-height:22px;height:22px;color:#000;transform:scale(0.7876,1.0);transform-origin:0 16px">4 980,0</div>
<div class="x c" style="left:622.77px;top:384px;font-size:15.5px;line-height:22px;height:22px;color:#000;transform:scale(0.7876,1.0);transform-origin:0 16px">6 276,0</div>
<div class="x c" style="left:712.77px;top:384px;font-size:15.5px;line-height:22px;height:22px;color:#000;transform:scale(0.7876,1.0);transform-origin:0 16px">7 831,2</div>
<div class="x c" style="left:803.77px;top:384px;font-size:15.5px;line-height:22px;height:22px;color:#000;transform:scale(0.7876,1.0);transform-origin:0 16px">9 697,4</div>
<div class="x c" style="left:888.89px;top:384px;font-size:15.5px;line-height:22px;height:22px;color:#000;transform:scale(0.7876,1.0);transform-origin:0 16px">11 936,9</div>
<div class="x c" style="left:59.20px;top:405px;font-size:15.5px;line-height:22px;height:22px;color:#000;font-weight:bold;transform:scale(0.7876,1.0);transform-origin:0 16px">Résultat net</div>
<div class="x c" style="left:349.77px;top:405px;font-size:15.5px;line-height:22px;height:22px;color:#000;font-weight:bold;transform:scale(0.7876,1.0);transform-origin:0 16px">7 000,0</div>
<div class="x c" style="left:439.77px;top:405px;font-size:15.5px;line-height:22px;height:22px;color:#000;font-weight:bold;transform:scale(0.7876,1.0);transform-origin:0 16px">9 000,0</div>
<div class="x c" style="left:525.65px;top:405px;font-size:15.5px;line-height:22px;height:22px;color:#000;font-weight:bold;transform:scale(0.7876,1.0);transform-origin:0 16px">11 620,0</div>
<div class="x c" style="left:615.98px;top:405px;font-size:15.5px;line-height:22px;height:22px;color:#000;font-weight:bold;transform:scale(0.7876,1.0);transform-origin:0 16px">14 644,0</div>
<div class="x c" style="left:705.98px;top:405px;font-size:15.5px;line-height:22px;height:22px;color:#000;font-weight:bold;transform:scale(0.7876,1.0);transform-origin:0 16px">18 272,8</div>
<div class="x c" style="left:796.98px;top:405px;font-size:15.5px;line-height:22px;height:22px;color:#000;font-weight:bold;transform:scale(0.7876,1.0);transform-origin:0 16px">22 627,4</div>
<div class="x c" style="left:887.98px;top:405px;font-size:15.5px;line-height:22px;height:22px;color:#000;font-weight:bold;transform:scale(0.7876,1.0);transform-origin:0 16px">27 852,8</div>
<div class="x c" style="left:59.20px;top:468px;font-size:15.5px;line-height:22px;height:22px;color:#000;transform:scale(0.7994,1.0);transform-origin:0 16px">Taux de croissance du CA</div>
<div class="x c" style="left:448.20px;top:468px;font-size:15.5px;line-height:22px;height:22px;color:#000;transform:scale(0.8373,1.0);transform-origin:0 16px">20,0%</div>
<div class="x c" style="left:540.20px;top:468px;font-size:15.5px;line-height:22px;height:22px;color:#2a6db3;transform:scale(0.8373,1.0);transform-origin:0 16px">20,0%</div>
<div class="x c" style="left:631.20px;top:468px;font-size:15.5px;line-height:22px;height:22px;color:#2a6db3;transform:scale(0.8373,1.0);transform-origin:0 16px">20,0%</div>
<div class="x c" style="left:721.20px;top:468px;font-size:15.5px;line-height:22px;height:22px;color:#2a6db3;transform:scale(0.8373,1.0);transform-origin:0 16px">20,0%</div>
<div class="x c" style="left:812.20px;top:468px;font-size:15.5px;line-height:22px;height:22px;color:#2a6db3;transform:scale(0.8373,1.0);transform-origin:0 16px">20,0%</div>
<div class="x c" style="left:903.20px;top:468px;font-size:15.5px;line-height:22px;height:22px;color:#2a6db3;transform:scale(0.8373,1.0);transform-origin:0 16px">20,0%</div>
<div class="x c" style="left:59.20px;top:487px;font-size:15.5px;line-height:22px;height:22px;color:#000;transform:scale(0.7994,1.0);transform-origin:0 16px">Coût des achats en % du CA</div>
<div class="x c" style="left:358.20px;top:487px;font-size:15.5px;line-height:22px;height:22px;color:#000;transform:scale(0.8373,1.0);transform-origin:0 16px">50,0%</div>
<div class="x c" style="left:448.20px;top:487px;font-size:15.5px;line-height:22px;height:22px;color:#000;transform:scale(0.8373,1.0);transform-origin:0 16px">50,0%</div>
<div class="x c" style="left:540.20px;top:487px;font-size:15.5px;line-height:22px;height:22px;color:#2a6db3;transform:scale(0.8373,1.0);transform-origin:0 16px">50,0%</div>
<div class="x c" style="left:631.20px;top:487px;font-size:15.5px;line-height:22px;height:22px;color:#2a6db3;transform:scale(0.8373,1.0);transform-origin:0 16px">50,0%</div>
<div class="x c" style="left:721.20px;top:487px;font-size:15.5px;line-height:22px;height:22px;color:#2a6db3;transform:scale(0.8373,1.0);transform-origin:0 16px">50,0%</div>
<div class="x c" style="left:812.20px;top:487px;font-size:15.5px;line-height:22px;height:22px;color:#2a6db3;transform:scale(0.8373,1.0);transform-origin:0 16px">50,0%</div>
<div class="x c" style="left:903.20px;top:487px;font-size:15.5px;line-height:22px;height:22px;color:#2a6db3;transform:scale(0.8373,1.0);transform-origin:0 16px">50,0%</div>
<div class="x c" style="left:59.20px;top:507px;font-size:15.5px;line-height:22px;height:22px;color:#000;transform:scale(0.7994,1.0);transform-origin:0 16px">Charges d&#x27;exploitation en % du CA</div>
<div class="x c" style="left:358.20px;top:507px;font-size:15.5px;line-height:22px;height:22px;color:#000;transform:scale(0.8373,1.0);transform-origin:0 16px">25,0%</div>
<div class="x c" style="left:448.20px;top:507px;font-size:15.5px;line-height:22px;height:22px;color:#000;transform:scale(0.8373,1.0);transform-origin:0 16px">25,0%</div>
<div class="x c" style="left:540.20px;top:507px;font-size:15.5px;line-height:22px;height:22px;color:#2a6db3;transform:scale(0.8373,1.0);transform-origin:0 16px">25,0%</div>
<div class="x c" style="left:631.20px;top:507px;font-size:15.5px;line-height:22px;height:22px;color:#2a6db3;transform:scale(0.8373,1.0);transform-origin:0 16px">25,0%</div>
<div class="x c" style="left:721.20px;top:507px;font-size:15.5px;line-height:22px;height:22px;color:#2a6db3;transform:scale(0.8373,1.0);transform-origin:0 16px">25,0%</div>
<div class="x c" style="left:812.20px;top:507px;font-size:15.5px;line-height:22px;height:22px;color:#2a6db3;transform:scale(0.8373,1.0);transform-origin:0 16px">25,0%</div>
<div class="x c" style="left:903.20px;top:507px;font-size:15.5px;line-height:22px;height:22px;color:#2a6db3;transform:scale(0.8373,1.0);transform-origin:0 16px">25,0%</div>
<div class="x c" style="left:59.20px;top:527px;font-size:15.5px;line-height:22px;height:22px;color:#000;transform:scale(0.7994,1.0);transform-origin:0 16px">D&amp;A en % du CA</div>
<div class="x c" style="left:358.20px;top:527px;font-size:15.5px;line-height:22px;height:22px;color:#000;transform:scale(0.8373,1.0);transform-origin:0 16px">10,0%</div>
<div class="x c" style="left:448.20px;top:527px;font-size:15.5px;line-height:22px;height:22px;color:#000;transform:scale(0.8373,1.0);transform-origin:0 16px">10,0%</div>
<div class="x c" style="left:540.20px;top:527px;font-size:15.5px;line-height:22px;height:22px;color:#2a6db3;transform:scale(0.8373,1.0);transform-origin:0 16px">10,0%</div>
<div class="x c" style="left:631.20px;top:527px;font-size:15.5px;line-height:22px;height:22px;color:#2a6db3;transform:scale(0.8373,1.0);transform-origin:0 16px">10,0%</div>
<div class="x c" style="left:721.20px;top:527px;font-size:15.5px;line-height:22px;height:22px;color:#2a6db3;transform:scale(0.8373,1.0);transform-origin:0 16px">10,0%</div>
<div class="x c" style="left:812.20px;top:527px;font-size:15.5px;line-height:22px;height:22px;color:#2a6db3;transform:scale(0.8373,1.0);transform-origin:0 16px">10,0%</div>
<div class="x c" style="left:903.20px;top:527px;font-size:15.5px;line-height:22px;height:22px;color:#2a6db3;transform:scale(0.8373,1.0);transform-origin:0 16px">10,0%</div>
<div class="x c" style="left:59.20px;top:548px;font-size:15.5px;line-height:22px;height:22px;color:#000;transform:scale(0.7994,1.0);transform-origin:0 16px">Charges d&#x27;intérêt (montant fixe)</div>
<div class="x c" style="left:349.77px;top:548px;font-size:15.5px;line-height:22px;height:22px;color:#000;transform:scale(0.7876,1.0);transform-origin:0 16px">5 000,0</div>
<div class="x c" style="left:439.77px;top:548px;font-size:15.5px;line-height:22px;height:22px;color:#000;transform:scale(0.7876,1.0);transform-origin:0 16px">5 000,0</div>
<div class="x c" style="left:531.77px;top:548px;font-size:15.5px;line-height:22px;height:22px;color:#2a6db3;transform:scale(0.7876,1.0);transform-origin:0 16px">5 000,0</div>
<div class="x c" style="left:622.77px;top:548px;font-size:15.5px;line-height:22px;height:22px;color:#2a6db3;transform:scale(0.7876,1.0);transform-origin:0 16px">5 000,0</div>
<div class="x c" style="left:712.77px;top:548px;font-size:15.5px;line-height:22px;height:22px;color:#2a6db3;transform:scale(0.7876,1.0);transform-origin:0 16px">5 000,0</div>
<div class="x c" style="left:803.77px;top:548px;font-size:15.5px;line-height:22px;height:22px;color:#2a6db3;transform:scale(0.7876,1.0);transform-origin:0 16px">5 000,0</div>
<div class="x c" style="left:894.77px;top:548px;font-size:15.5px;line-height:22px;height:22px;color:#2a6db3;transform:scale(0.7876,1.0);transform-origin:0 16px">5 000,0</div>
<div class="x" style="left:487px;top:301px;width:93px;height:22.5px;border:2px solid #2b7a4b"></div>
<div class="x" style="left:577px;top:321px;width:4px;height:3.5px;background:#2b7a4b;box-shadow:-1px -1px 0 #fff"></div>
</body></html>
